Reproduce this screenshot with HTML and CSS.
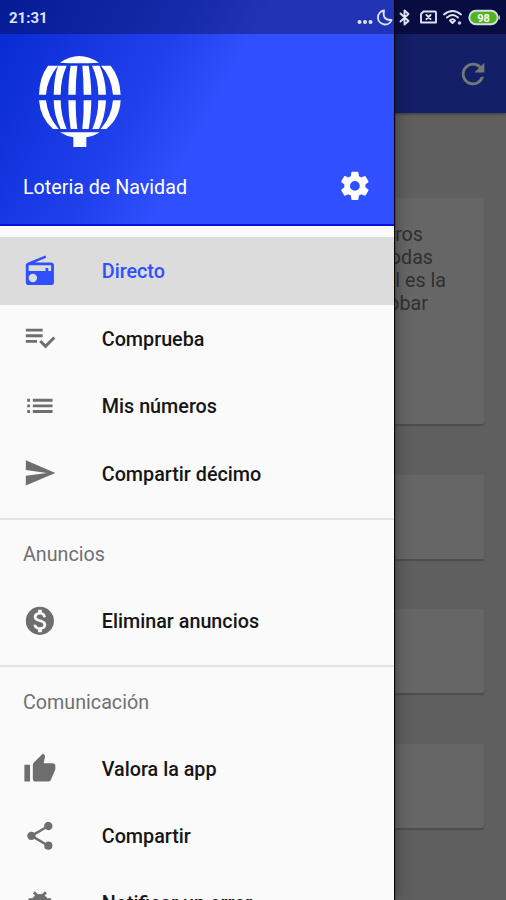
FILE: index.html
```html
<!DOCTYPE html>
<html lang="es">
<head>
<meta charset="utf-8">
<title>Loteria de Navidad</title>
<link rel="stylesheet" href="styles.css">
</head>
<body>
<div class="screen">
  <main class="page">
    <header class="appbar">
      <svg class="refresh" viewBox="0 0 24 24"><path d="M17.65 6.35A7.96 7.96 0 0 0 12 4a8 8 0 1 0 7.73 10h-2.08A6 6 0 1 1 12 6c1.66 0 3.14.69 4.22 1.78L13 11h7V4z"/></svg>
    </header>
    <section class="cards">
      <div class="card card-large">
        <p class="line line-1">ros</p>
        <p class="line line-2">odas</p>
        <p class="line line-3">l es la</p>
        <p class="line line-4">obar</p>
      </div>
      <div class="card"></div>
      <div class="card"></div>
      <div class="card"></div>
    </section>
  </main>

  <nav class="drawer">
    <header class="drawer-head">
      <svg class="logo" viewBox="50 45 255 280">
        <path d="M119 68Q176 28 236 68Q176 72 119 68Z"/>
        <path d="M83 77H113Q80 116 77 164H56Q57 112 83 77Z"/>
        <path d="M113 77H139Q121 117 121 164H100Q101 112 113 77Z"/>
        <path d="M151 77H171Q166 118 166 164H144Q144 114 151 77Z"/>
        <path d="M186 77H205Q212 116 213 164H190Q190 116 186 77Z"/>
        <path d="M215 77H238Q256 116 257 164H234Q233 114 215 77Z"/>
        <path d="M242 77H271Q299 112 301 164H278Q274 112 242 77Z"/>
        <path d="M56 181H77Q82 230 115 267L98 267Q60 235 56 181Z"/>
        <path d="M100 181H121Q122 230 139 267H121Q101 228 100 181Z"/>
        <path d="M144 181H166Q166 230 171 267H151Q144 224 144 181Z"/>
        <path d="M190 181H213Q212 230 205 267H186Q191 226 190 181Z"/>
        <path d="M234 181H257Q255 230 236 267H216Q234 226 234 181Z"/>
        <path d="M278 181H301Q298 235 258 267H241Q274 230 278 181Z"/>
        <path d="M119 277H238Q221 289 198 292V321H159V292Q138 289 119 277Z"/>
      </svg>
      <div class="title-row">
        <span>Loteria de Navidad</span>
        <svg class="icon gear" viewBox="0 0 24 24"><path d="M19.43 12.98c.04-.32.07-.64.07-.98s-.03-.66-.07-.98l2.11-1.65c.19-.15.24-.42.12-.64l-2-3.46c-.12-.22-.39-.3-.61-.22l-2.49 1c-.52-.4-1.08-.73-1.69-.98l-.38-2.65C14.46 2.18 14.25 2 14 2h-4c-.25 0-.46.18-.49.42l-.38 2.65c-.61.25-1.17.59-1.69.98l-2.49-1c-.23-.09-.49 0-.61.22l-2 3.46c-.13.22-.07.49.12.64l2.11 1.65c-.04.32-.07.65-.07.98s.03.66.07.98l-2.11 1.65c-.19.15-.24.42-.12.64l2 3.46c.12.22.39.3.61.22l2.49-1c.52.4 1.08.73 1.69.98l.38 2.65c.03.24.24.42.49.42h4c.25 0 .46-.18.49-.42l.38-2.65c.61-.25 1.17-.59 1.69-.98l2.49 1c.23.09.49 0 .61-.22l2-3.46c.12-.22.07-.49-.12-.64zM12 15.5a3.5 3.5 0 1 1 0-7 3.5 3.5 0 0 1 0 7z"/></svg>
      </div>
    </header>

    <div class="group primary">
      <a class="item active"><svg class="icon" viewBox="0 0 24 24"><path d="M3.24 6.15C2.51 6.43 2 7.17 2 8v12a2 2 0 0 0 2 2h16a2 2 0 0 0 2-2V8a2 2 0 0 0-2-2H8.3l8.26-3.34L15.88 1zM7 20a3 3 0 1 1 0-6 3 3 0 0 1 0 6zm13-8h-2v-2h-2v2H4V8h16z"/></svg><span>Directo</span></a>
      <a class="item"><svg class="icon" viewBox="0 0 24 24"><path d="M14 10H2v2h12zm0-4H2v2h12zM2 16h8v-2H2zm19.500-4.500L23 13l-6.990 7-4.510-4.500L13 14l3.010 3z" transform="translate(0 -.5)"/></svg><span>Comprueba</span></a>
      <a class="item"><svg class="icon" viewBox="0 0 24 24"><path d="M3 13h2v-2H3zm0 4h2v-2H3zm0-8h2V7H3zm4 4h14v-2H7zm0 4h14v-2H7zM7 7v2h14V7z"/></svg><span>Mis números</span></a>
      <a class="item"><svg class="icon" viewBox="0 0 24 24"><path d="M2.01 21 23 12 2.01 3 2 10l15 2-15 2z"/></svg><span>Compartir décimo</span></a>
    </div>
    <div class="group">
      <h2>Anuncios</h2>
      <a class="item"><svg class="icon" viewBox="0 0 24 24"><path d="M12 2a10 10 0 1 0 0 20 10 10 0 0 0 0-20zm1.41 16.09V20h-2.67v-1.93c-1.71-.36-3.16-1.46-3.27-3.4h1.96c.1 1.05.82 1.87 2.65 1.87 1.96 0 2.4-.98 2.4-1.59 0-.83-.44-1.61-2.67-2.14-2.48-.6-4.18-1.62-4.18-3.67 0-1.72 1.39-2.84 3.11-3.21V4h2.67v1.95c1.86.45 2.79 1.86 2.85 3.39H14.3c-.05-1.11-.64-1.87-2.22-1.87-1.5 0-2.4.68-2.4 1.64 0 .84.65 1.39 2.67 1.91s4.18 1.39 4.18 3.91c-.01 1.83-1.38 2.83-3.12 3.16z"/></svg><span>Eliminar anuncios</span></a>
    </div>
    <div class="group contact">
      <h2>Comunicación</h2>
      <a class="item"><svg class="icon" viewBox="0 0 24 24"><path d="M1 21h4V9H1zm22-11a2 2 0 0 0-2-2h-6.31l.95-4.57.03-.32c0-.41-.17-.79-.44-1.06L14.17 1 7.59 7.59C7.22 7.95 7 8.45 7 9v10a2 2 0 0 0 2 2h9c.83 0 1.54-.5 1.84-1.22l3.02-7.05c.09-.23.14-.47.14-.73z"/></svg><span>Valora la app</span></a>
      <a class="item"><svg class="icon" viewBox="0 0 24 24"><path d="M18 16.08c-.76 0-1.44.3-1.96.77L8.91 12.7c.05-.23.09-.46.09-.7s-.04-.47-.09-.7l7.05-4.11A3 3 0 1 0 15 5c0 .24.04.47.09.7L8.04 9.81A3 3 0 1 0 6 15c.79 0 1.5-.31 2.04-.81l7.12 4.16c-.05.21-.08.43-.08.65A2.92 2.92 0 1 0 18 16.08z"/></svg><span>Compartir</span></a>
      <a class="item last"><svg class="icon" viewBox="0 0 24 24"><path d="M20 8h-2.81a5.99 5.99 0 0 0-1.82-1.96L17 4.41 15.59 3l-2.17 2.17a6.03 6.03 0 0 0-2.83 0L8.41 3 7 4.41l1.62 1.63C7.88 6.55 7.26 7.22 6.81 8H4v2h2.09c-.05.33-.09.66-.09 1v1H4v2h2v1c0 .34.04.67.09 1H4v2h2.81a6 6 0 0 0 10.38 0H20v-2h-2.09c.05-.33.09-.66.09-1v-1h2v-2h-2v-1c0-.34-.04-.67-.09-1H20zm-6 8h-4v-2h4zm0-4h-4v-2h4z"/></svg><span>Notificar un error</span></a>
    </div>
  </nav>

  <div class="statusbar">
    <span class="clock">21:31</span>
    <svg class="status-icons" viewBox="0 0 150 34">
      <g fill="#dfe4fa"><circle cx="3.500" cy="22" r="2"/><circle cx="9" cy="22" r="2"/><circle cx="14.500" cy="22" r="2"/></g>
      <g fill="none" stroke="#dfe2f2" stroke-width="1.900" stroke-linejoin="round" stroke-linecap="round">
        <path d="M28 10.500A7 7 0 1 0 35.500 20Q26 20.500 28 10.500Z"/>
        <path d="M44.500 13.500L52.500 21L48.500 24.500V10.500L52.500 14L44.500 21.500"/>
        <path d="M67.500 11.500H79Q80 11.500 80 12.500V22.500H65V14Z"/>
        <path d="M70.500 15L74.500 19M74.500 15L70.500 19"/>
        <path d="M88 14.500Q96.500 7.500 105 14.500M91 17.500Q96.500 12.500 102 17.500M94 20.500Q96.500 18 99 20.500L96.500 23Z"/>
      </g>
      <circle cx="103.500" cy="23" r="1.800" fill="#b9cdf5"/>
      <rect x="113.300" y="10.800" width="28.400" height="13.400" rx="6.700" fill="#4fb51c" stroke="#d9dce3" stroke-width="1.900"/>
      <path d="M143.300 15.500V19.500" stroke="#c5cad8" stroke-width="1.300"/>
      <text class="battery" x="127.500" y="21.700" text-anchor="middle">98</text>
    </svg>
  </div>
</div>
</body>
</html>
```
FILE: styles.css
```css
* { box-sizing: border-box; }
body { margin: 0; font-family: Roboto, sans-serif; }
.screen { position: relative; width: 506px; height: 900px; overflow: hidden; background: #5f5f5f; }

.page { height: 900px; }
.appbar {
  display: flex; align-items: center; justify-content: flex-end;
  height: 113px; padding: 34px 16px 0 0; background: #131f66;
  box-shadow: 0 1px 3px rgba(0,0,0,.4);
}
.refresh { width: 34px; height: 34px; fill: #777; }
.cards { display: flex; flex-direction: column; gap: 50.500px; padding: 85px 22px 0; }
.card { height: 84px; border-radius: 2px; background: #666; box-shadow: 0 2px 1px #4d4d4d; }
.card-large { height: 226px; padding-top: 25px; }
.line { margin: 0; height: 23px; line-height: 23px; font-size: 19.7px; text-align: right; color: #303030; white-space: nowrap; }
.line-1 { width: 401px; }
.line-2 { width: 411px; }
.line-3 { width: 424px; }
.line-4 { width: 406px; }

.drawer {
  position: absolute; left: 0; top: 0; width: 394px; height: 900px; overflow: hidden;
  background: #fafafa; box-shadow: 1px 0 1px 0 #080808, 1px 0 0 0 #080808, 2px 0 14px rgba(0,0,0,.35);
}
.drawer-head {
  display: flex; flex-direction: column; justify-content: space-between;
  height: 225.500px; padding: 55px 22.500px 21px 23px; margin-bottom: 11.500px;
  border-bottom: 2px solid #0510d8;
  background: linear-gradient(118deg, #0629d0 0%, #2040ec 37%, #304ffe 53%, #304ffe 100%);
}
.logo { width: 85px; height: 93.300px; margin-left: 13.500px; fill: #fff; }
.title-row { display: flex; align-items: center; justify-content: space-between; height: 34px; font-size: 19.700px; color: #fff; }
.title-row span { padding-top: 3px; }
.icon { flex: none; width: 33.750px; height: 33.750px; fill: #6e6e6e; }
.gear { fill: #fff; }
.group + .group { margin-top: 10.500px; border-top: 2px solid #e3e3e3; }
.group + .contact { margin-top: 10px; }
.contact h2 { height: 68.500px; padding-top: 1px; }
.item { display: flex; align-items: center; gap: 45.500px; height: 67.500px; padding-left: 22.500px; font-size: 19.750px; font-weight: 500; color: #161616; }
.item span { padding-top: 1px; }
.primary .item span { padding-top: 2px; }
.item.last span { padding: 0; }
.active { background: #dcdcdc; color: #304ffe; }
.active .icon { fill: #304ffe; }
h2 { margin: 0; height: 67.500px; padding-left: 23px; line-height: 69px; font-size: 19.700px; font-weight: 400; color: #707070; }
.item.active { color: #304ffe; }

.statusbar {
  position: absolute; left: 0; top: 0; display: flex; justify-content: space-between; align-items: center;
  width: 506px; height: 34px; padding: 0 0 0 9px;
  background: linear-gradient(90deg, rgba(0,0,40,.34) 0 394px, rgba(0,0,40,.600) 394px);
}
.clock { padding-top: 2px; font-size: 15px; font-weight: 700; color: #dfe4fa; }
.status-icons { width: 150px; height: 34px; }
.battery { font: 700 11px Roboto, sans-serif; fill: #fff; }
```
